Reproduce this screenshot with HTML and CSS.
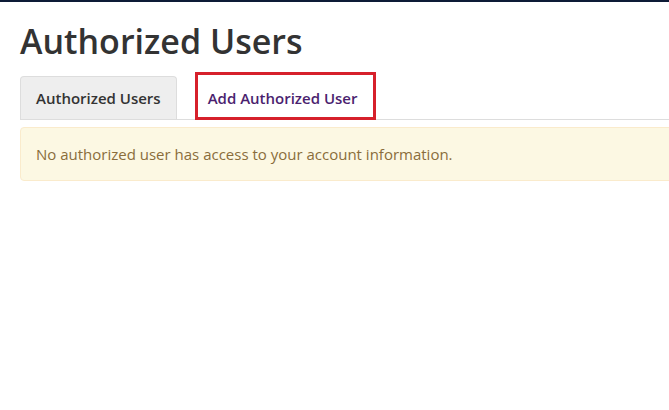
FILE: index.html
```html
<!DOCTYPE html>
<html lang="en">

<head>

    <meta charset="UTF-8">

    <meta name="viewport" content="width=device-width, initial-scale=1.0">

    <title>Authorized Users</title>

    <link rel="stylesheet" href="styles.css">

</head>

<body>

    <div class="topbar"></div>

    <div class="page">

        <h1>Authorized Users</h1>

        <ul class="tabs">

            <li class="tab tab-current">Authorized Users</li>

            <li class="tab tab-add"><a href="#">Add Authorized User</a></li>

        </ul>

        <div class="alert">No authorized user has access to your account information.</div>

    </div>

</body>

</html>
```

FILE: styles.css
```css
body {

    font-family: 'Open Sans', 'Liberation Sans', sans-serif;

    margin: 0;

    padding: 0;

    background: #fff;

    color: #333;

    overflow-x: hidden;

}

.topbar {

    height: 2px;

    background: #0d1b36;

}

.page {

    width: 740px;

    padding: 0 20px;

}

h1 {

    font-size: 34px;

    font-weight: 600;

    line-height: 1.1;

    margin: 21px 0 12px;

    color: #333;

}

.tabs {

    display: flex;

    align-items: flex-end;

    list-style: none;

    margin: 0;

    padding: 0;

    border-bottom: 1px solid #ddd;

}

.tab {

    font-size: 15px;

    font-weight: 600;

    line-height: 22px;

}

.tab-current {

    padding: 10px 15px;

    background: #eee;

    border: 1px solid #ddd;

    border-bottom: none;

    border-radius: 4px 4px 0 0;

}

.tab-add {

    margin-left: 18px;

    margin-bottom: -1px;

    border: 3px solid #d6202b;

}

.tab-add a {

    display: block;

    padding: 12px 16px 8px 10px;

    color: #4b1f6f;

    text-decoration: none;

}

.alert {

    margin-top: 7px;

    padding: 15px 15px;

    background: #fcf8e3;

    border: 1px solid #faebcc;

    border-radius: 4px;

    color: #8a6d3b;

    font-size: 15px;

    line-height: 22px;

}
```
